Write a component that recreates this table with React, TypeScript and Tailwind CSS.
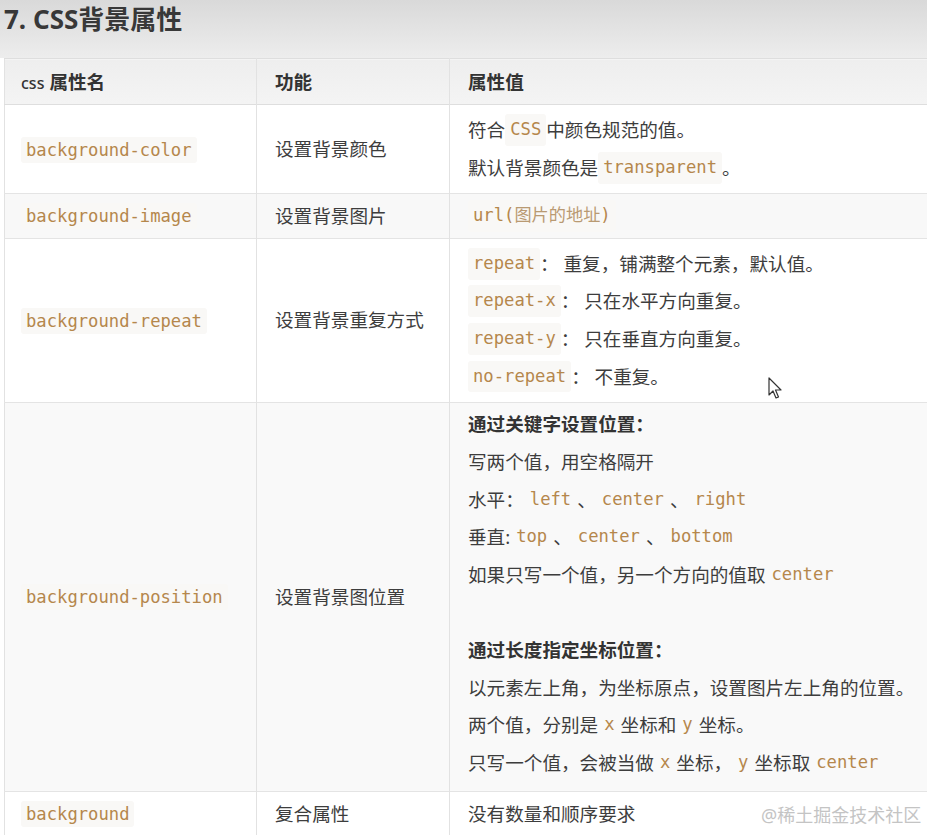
import React from 'react';

const cjk = '"Noto Sans", "Noto Sans CJK SC", sans-serif';
const mono = '"DejaVu Sans Mono", "Noto Sans CJK SC", monospace';

// inline code chip
const Code = ({ children, bare }: { children: React.ReactNode; bare?: boolean }) => (
  <span
    className={`text-[#b5874c] text-[17.2px] rounded-[3px] ${bare ? 'px-[6px]' : 'bg-[#f9f8f6] px-[5px] py-[3px]'}`}
    style={{ fontFamily: mono }}
  >
    {children}
  </span>
);

const Line = ({ children, bold }: { children: React.ReactNode; bold?: boolean }) => (
  <div className={`h-[37.6px] flex items-center whitespace-nowrap ${bold ? 'font-bold text-[#333]' : ''}`}>{children}</div>
);

const rows = [
  {
    name: 'background-color',
    fn: '设置背景颜色',
    h: 'h-[89px]',
    bg: 'bg-white',
    value: (
      <>
        <Line>符合 <Code>CSS</Code> 中颜色规范的值。</Line>
        <Line>默认背景颜色是 <Code>transparent</Code> 。</Line>
      </>
    ),
  },
  {
    name: 'background-image',
    fn: '设置背景图片',
    h: 'h-[44px]',
    bg: 'bg-[#f8f8f8]',
    value: (
      <Line>
        <Code>url(<span className="text-[#b99a72]">图片的地址</span>)</Code>
      </Line>
    ),
  },
  {
    name: 'background-repeat',
    fn: '设置背景重复方式',
    h: 'h-[164px]',
    bg: 'bg-white',
    value: (
      <>
        <Line><Code>repeat</Code>： 重复，铺满整个元素，默认值。</Line>
        <Line><Code>repeat-x</Code>： 只在水平方向重复。</Line>
        <Line><Code>repeat-y</Code>： 只在垂直方向重复。</Line>
        <Line><Code>no-repeat</Code>： 不重复。</Line>
      </>
    ),
  },
  {
    name: 'background-position',
    fn: '设置背景图位置',
    h: 'h-[388px]',
    bg: 'bg-[#f9f9f9]',
    value: (
      <div className="pb-[6px]">
        <Line bold>通过关键字设置位置：</Line>
        <Line>写两个值，用空格隔开</Line>
        <Line>水平： <Code bare>left</Code> 、 <Code bare>center</Code> 、 <Code bare>right</Code></Line>
        <Line>垂直:<Code bare>top</Code> 、 <Code bare>center</Code> 、 <Code bare>bottom</Code></Line>
        <Line>如果只写一个值，另一个方向的值取 <Code bare>center</Code></Line>
        <Line>{''}</Line>
        <Line bold>通过长度指定坐标位置：</Line>
        <Line>以元素左上角，为坐标原点，设置图片左上角的位置。</Line>
        <Line>两个值，分别是<Code bare>x</Code>坐标和<Code bare>y</Code>坐标。</Line>
        <Line>只写一个值，会被当做 <Code bare>x</Code> 坐标， <Code bare>y</Code>坐标取 <Code bare>center</Code></Line>
      </div>
    ),
  },
  {
    name: 'background',
    fn: '复合属性',
    h: 'h-[45px]',
    bg: 'bg-white',
    value: <Line>没有数量和顺序要求</Line>,
  },
];

const App = () => {
  return (
    <div className="relative w-[927px] h-[835px] overflow-hidden bg-white text-[#3d3d3d] text-[18.6px]" style={{ fontFamily: cjk }}>
      {/* title band */}
      <div className="h-[58px] bg-gradient-to-b from-[#d9d9d9] to-[#ededed] pl-[4px] pt-[2px]">
        <h1 className="text-[26px] font-bold text-[#383838] leading-[34px]">7. CSS背景属性</h1>
      </div>

      <div className="pl-[4px]">
        <table className="table-fixed w-[960px] border-collapse border-l border-[#e2e2e2]">
          <colgroup>
            <col className="w-[252px]" />
            <col className="w-[193px]" />
            <col />
          </colgroup>
          <thead>
            <tr className="h-[46px] bg-gradient-to-b from-[#eeeeee] to-[#f4f4f4] border-t border-b border-[#dedede]">
              <th className="text-left font-bold text-[#333] pl-[16px] border-r border-[#e2e2e2]">
                <span className="text-[16px] font-medium mr-[5px]">css</span>属性名
              </th>
              <th className="text-left font-bold text-[#333] pl-[18px] border-r border-[#e2e2e2]">功能</th>
              <th className="text-left font-bold text-[#333] pl-[18px]">属性值</th>
            </tr>
          </thead>
          <tbody>
            {rows.map((r) => (
              <tr key={r.name} className={`${r.h} ${r.bg} border-b border-[#e4e4e4]`}>
                <td className="align-middle pl-[16px] border-r border-[#e2e2e2]">
                  <Code>{r.name}</Code>
                </td>
                <td className="align-middle pl-[18px] border-r border-[#e2e2e2]">{r.fn}</td>
                <td className="align-middle pl-[18px] py-[3px]">{r.value}</td>
              </tr>
            ))}
          </tbody>
        </table>
      </div>

      {/* mouse pointer */}
      <svg className="absolute left-[768px] top-[377px]" width="16" height="24" viewBox="0 0 16 24">
        <path d="M1 1 L1 18 L5 14 L8 21 L10.5 20 L7.5 13 L13 13 Z" fill="#fff" stroke="#333" strokeWidth="1.2" strokeLinejoin="round" />
      </svg>

      {/* watermark */}
      <div className="absolute left-[761px] top-[802px] text-[18px] text-[#c4c4c4] whitespace-nowrap">@稀土掘金技术社区</div>
    </div>
  );
};

export default App;
